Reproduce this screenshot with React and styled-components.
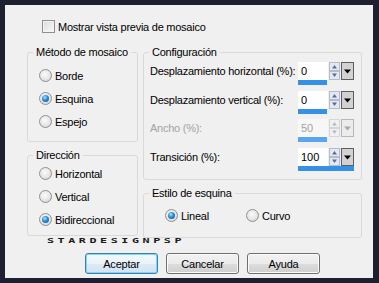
import React from "react";
import styled, { createGlobalStyle } from "styled-components";

const GlobalStyle = createGlobalStyle`
  html, body { margin: 0; padding: 0; width: 379px; height: 283px; overflow: hidden; background: #1d2031; }
  body {
    padding: 5px 6px 5px 5px;
    box-sizing: border-box;
    font-family: "Liberation Sans", Arial, sans-serif;
    font-size: 11px;
    color: #000;
  }
`;

const Dialog = styled.div`
  width: 368px;
  height: 273px;
  box-sizing: border-box;
  background: #f0f0f0;
  padding: 15px 0 0 22px;
  display: flex;
  flex-direction: column;
`;

const Text = styled.span`
  letter-spacing: -0.25px;
  white-space: nowrap;
  color: ${(p) => (p.$disabled ? "#a3a3a3" : "#000")};
`;

const CheckRow = styled.label`
  display: flex;
  align-items: center;
  gap: 3px;
  height: 13px;
  margin-left: 15px;
`;

const CheckBox = styled.span`
  width: 13px;
  height: 13px;
  box-sizing: border-box;
  border: 1px solid #8e8f8f;
  background: linear-gradient(135deg, #d6d9de 0%, #f1f1f1 70%, #fbfbfb 100%);
  box-shadow: inset 0 0 0 1px #f4f4f4;
`;

const Columns = styled.div`
  display: flex;
  gap: 5px;
  margin-top: 13px;
  align-items: flex-start;
`;

const Column = styled.div`
  display: flex;
  flex-direction: column;
  gap: 7px;
  width: ${(p) => p.$w}px;
`;

const Group = styled.fieldset`
  margin: 0;
  padding: 0;
  min-width: 0;
  box-sizing: border-box;
  height: ${(p) => p.$h}px;
  border: 1px solid #d9d9d9;
  border-radius: 3px;
`;

const Legend = styled.legend`
  margin-left: 5px;
  padding: 0 3px;
  line-height: 13px;
  font-size: 11px;
  letter-spacing: -0.25px;
`;

const GroupBody = styled.div`
  display: flex;
  flex-direction: ${(p) => (p.$row ? "row" : "column")};
  gap: ${(p) => p.$gap || 0}px;
  padding: ${(p) => p.$pad};
`;

const RadioRow = styled.label`
  display: flex;
  align-items: center;
  gap: 3px;
  height: 23px;
  width: ${(p) => (p.$w ? `${p.$w}px` : "auto")};
`;

const RadioCircle = styled.span`
  width: 13px;
  height: 13px;
  box-sizing: border-box;
  border-radius: 50%;
  border: 1px solid #8f9090;
  background: radial-gradient(circle at 45% 40%, #fbfbfb 0%, #e6e6e6 55%, #c9c9c9 100%);
  display: flex;
  align-items: center;
  justify-content: center;
  flex: none;
`;

const RadioDot = styled.span`
  width: 7px;
  height: 7px;
  border-radius: 50%;
  background: radial-gradient(circle at 40% 35%, #a9e4ff 0%, #2a8ad6 45%, #0c4f92 100%);
`;

const FieldRow = styled.div`
  display: flex;
  justify-content: space-between;
  align-items: flex-start;
  height: 23px;
`;

const FieldLabel = styled(Text)`
  line-height: 18px;
`;

const Spinner = styled.div`
  display: flex;
  flex-direction: column;
  width: 56px;
`;

const SpinTop = styled.div`
  display: flex;
  gap: 1px;
  height: 18px;
`;

const ValueBox = styled.div`
  width: 30px;
  height: 18px;
  box-sizing: border-box;
  padding-left: 3px;
  line-height: 18px;
  background: ${(p) => (p.$disabled ? "#f7f7f7" : "#fff")};
  color: ${(p) => (p.$disabled ? "#a3a3a3" : "#000")};
`;

const Bar = styled.div`
  height: 5px;
  background: ${(p) => (p.$disabled ? "#5aa5ec" : "#3590e6")};
`;

const Watermark = styled.div`
  align-self: flex-start;
  width: max-content;
  margin-left: 20px;
  height: 6px;
  line-height: 6px;
  font-family: "DejaVu Sans Mono", "Liberation Mono", monospace;
  font-weight: bold;
  font-size: 9px;
  letter-spacing: 2.75px;
  color: #1a1a1a;
  white-space: nowrap;
  transform: scale(1.3, 0.8);
  transform-origin: left center;
`;

const ButtonRow = styled.div`
  display: flex;
  gap: 8px;
  margin-top: 9px;
  padding-left: 58px;
`;

const Button = styled.button`
  width: 73px;
  height: 21px;
  padding: 0;
  font-family: "Liberation Sans", Arial, sans-serif;
  font-size: 11px;
  letter-spacing: -0.2px;
  color: #000;
  border-radius: 3px;
  border: 1px solid ${(p) => (p.$default ? "#3c7fb1" : "#707070")};
  background: ${(p) =>
    p.$default
      ? "linear-gradient(#f3f9fd 0%, #eaf3fa 50%, #dcebf6 51%, #d0e4f2 100%)"
      : "linear-gradient(#f2f2f2 0%, #ebebeb 50%, #dddddd 51%, #cfcfcf 100%)"};
  box-shadow: ${(p) =>
    p.$default ? "inset 0 0 0 1px #7fd6f6" : "inset 0 0 0 1px #fbfbfb"};
`;

function Radio({ checked, label, w }) {
  return (
    <RadioRow $w={w}>
      <RadioCircle>{checked && <RadioDot />}</RadioCircle>
      <Text>{label}</Text>
    </RadioRow>
  );
}

function SpinArrows({ disabled }) {
  const tri = disabled ? "#b5bac4" : "#5a6f96";
  const stroke = disabled ? "#d3d6db" : "#b4bccb";
  const fill = disabled ? "#f0f1f3" : "#e3e9f3";
  return (
    <svg width="11" height="18" viewBox="0 0 11 18">
      <rect x="0.5" y="0.5" width="10" height="8" fill={fill} stroke={stroke} />
      <rect x="0.5" y="9.5" width="10" height="8" fill={fill} stroke={stroke} />
      <path d="M3 6.5 L5.5 3 L8 6.5 Z" fill={tri} />
      <path d="M3 11.5 L5.5 15 L8 11.5 Z" fill={tri} />
    </svg>
  );
}

function DropButton({ disabled }) {
  return (
    <svg width="13" height="18" viewBox="0 0 13 18">
      <rect
        x="0.5"
        y="0.5"
        width="12"
        height="17"
        fill={disabled ? "#ececec" : "#d2d2d2"}
        stroke={disabled ? "#b8b8b8" : "#5e5e5e"}
      />
      <path d="M3 7.5 L10 7.5 L6.5 11.5 Z" fill={disabled ? "#a8a8a8" : "#000"} />
    </svg>
  );
}

function SpinField({ label, value, fill, disabled }) {
  return (
    <FieldRow>
      <FieldLabel $disabled={disabled}>{label}</FieldLabel>
      <Spinner>
        <SpinTop>
          <ValueBox $disabled={disabled}>{value}</ValueBox>
          <SpinArrows disabled={disabled} />
          <DropButton disabled={disabled} />
        </SpinTop>
        <Bar $disabled={disabled} style={{ width: fill }} />
      </Spinner>
    </FieldRow>
  );
}

export default function App() {
  return (
    <>
      <GlobalStyle />
      <Dialog>
        <CheckRow>
          <CheckBox />
          <Text>Mostrar vista previa de mosaico</Text>
        </CheckRow>
        <Columns>
          <Column $w={111}>
            <Group $h={96}>
              <Legend>Método de mosaico</Legend>
              <GroupBody $pad="5px 0 0 11px">
                <Radio label="Borde" />
                <Radio label="Esquina" checked />
                <Radio label="Espejo" />
              </GroupBody>
            </Group>
            <Group $h={87}>
              <Legend>Dirección</Legend>
              <GroupBody $pad="0 0 0 11px">
                <Radio label="Horizontal" />
                <Radio label="Vertical" />
                <Radio label="Bidireccional" checked />
              </GroupBody>
            </Group>
          </Column>
          <Column $w={219}>
            <Group $h={134}>
              <Legend>Configuración</Legend>
              <GroupBody $pad="3px 7px 0 6px" $gap={5.5}>
                <SpinField label="Desplazamiento horizontal (%):" value="0" fill={29} />
                <SpinField label="Desplazamiento vertical (%):" value="0" fill={29} />
                <SpinField label="Ancho (%):" value="50" fill={29} disabled />
                <SpinField label="Transición (%):" value="100" fill={56} />
              </GroupBody>
            </Group>
            <Group $h={51}>
              <Legend>Estilo de esquina</Legend>
              <GroupBody $row $pad="4px 0 0 21px">
                <Radio label="Lineal" checked w={81} />
                <Radio label="Curvo" />
              </GroupBody>
            </Group>
          </Column>
        </Columns>
        <Watermark>STARDESIGNPSP</Watermark>
        <ButtonRow>
          <Button $default>Aceptar</Button>
          <Button>Cancelar</Button>
          <Button>Ayuda</Button>
        </ButtonRow>
      </Dialog>
    </>
  );
}
